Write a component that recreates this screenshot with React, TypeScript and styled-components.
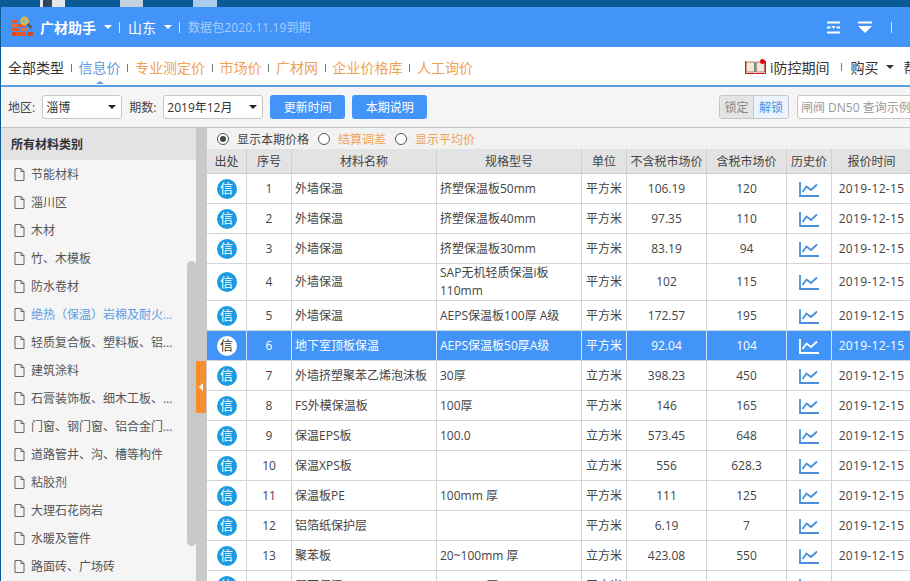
import React from 'react';
import styled, { createGlobalStyle } from 'styled-components';

const FONT = '"Open Sans", "Noto Sans CJK SC", sans-serif';
const BLUE = '#4294f8';

const tabs = [
  { label: '全部类型', tone: 'plain' },
  { label: '信息价', tone: 'active' },
  { label: '专业测定价', tone: 'orange' },
  { label: '市场价', tone: 'orange' },
  { label: '广材网', tone: 'orange' },
  { label: '企业价格库', tone: 'orange' },
  { label: '人工询价', tone: 'orange' },
];

const categories = [
  '节能材料',
  '淄川区',
  '木材',
  '竹、木模板',
  '防水卷材',
  '绝热（保温）岩棉及耐火材料',
  '轻质复合板、塑料板、铝塑板',
  '建筑涂料',
  '石膏装饰板、细木工板、胶合板',
  '门窗、钢门窗、铝合金门窗',
  '道路管井、沟、槽等构件',
  '粘胶剂',
  '大理石花岗岩',
  '水暖及管件',
  '路面砖、广场砖',
];

const rows = [
  ['外墙保温', '挤塑保温板50mm', '平方米', '106.19', '120'],
  ['外墙保温', '挤塑保温板40mm', '平方米', '97.35', '110'],
  ['外墙保温', '挤塑保温板30mm', '平方米', '83.19', '94'],
  ['外墙保温', 'SAP无机轻质保温i板110mm', '平方米', '102', '115'],
  ['外墙保温', 'AEPS保温板100厚 A级', '平方米', '172.57', '195'],
  ['地下室顶板保温', 'AEPS保温板50厚A级', '平方米', '92.04', '104'],
  ['外墙挤塑聚苯乙烯泡沫板', '30厚', '立方米', '398.23', '450'],
  ['FS外模保温板', '100厚', '平方米', '146', '165'],
  ['保温EPS板', '100.0', '立方米', '573.45', '648'],
  ['保温XPS板', '', '立方米', '556', '628.3'],
  ['保温板PE', '100mm 厚', '平方米', '111', '125'],
  ['铝箔纸保护层', '', '平方米', '6.19', '7'],
  ['聚苯板', '20~100mm 厚', '立方米', '423.08', '550'],
  ['屋面保温', '100mm 厚', '平方米', '132.74', '150'],
];

const columns = [
  { title: '出处', width: 40 },
  { title: '序号', width: 45 },
  { title: '材料名称', width: 145 },
  { title: '规格型号', width: 145 },
  { title: '单位', width: 45 },
  { title: '不含税市场价', width: 80 },
  { title: '含税市场价', width: 80 },
  { title: '历史价', width: 45 },
  { title: '报价时间', width: 80 },
];

const GlobalStyle = createGlobalStyle`
  html, body {
    margin: 0;
    padding: 0;
    background: #0a5a96;
  }
  * {
    box-sizing: border-box;
  }
`;

const Desktop = styled.div`
  width: 910px;
  height: 581px;
  overflow: hidden;
  display: flex;
  flex-direction: column;
  background: #0a5a96;
  font-family: ${FONT};
  font-size: 12px;
  color: #444;
`;

const TaskStrip = styled.div`
  height: 7px;
  flex-shrink: 0;
  display: flex;
  padding-left: 40px;
`;

const StripThumb = styled.div<{ $width: number; $gap: number; $color: string }>`
  width: ${({ $width }) => $width}px;
  margin-right: ${({ $gap }) => $gap}px;
  background: ${({ $color }) => $color};
`;

const AppWindow = styled.div`
  flex: 1;
  min-height: 0;
  margin-left: 1px;
  display: flex;
  flex-direction: column;
  background: #f5f5f5;
`;

const Header = styled.header`
  height: 40px;
  flex-shrink: 0;
  display: flex;
  align-items: center;
  padding-left: 10px;
  background: ${BLUE};
  color: #fff;
`;

const AppName = styled.div`
  margin-left: 5px;
  font-size: 14px;
  font-weight: 700;
`;

const Region = styled.div`
  font-size: 14px;
`;

const Caret = styled.span<{ $color?: string; $size?: number }>`
  display: inline-block;
  width: 0;
  height: 0;
  flex-shrink: 0;
  border-left: ${({ $size }) => $size ?? 4}px solid transparent;
  border-right: ${({ $size }) => $size ?? 4}px solid transparent;
  border-top: ${({ $size }) => $size ?? 4}px solid ${({ $color }) => $color ?? '#fff'};
`;

const HeaderCaret = styled(Caret)`
  margin: 0 7px 0 8px;
`;

const HeaderSep = styled.span`
  width: 1px;
  height: 11px;
  margin-right: 8px;
  background: #cfe3fd;
`;

const Expiry = styled.div`
  color: #a8cdfb;
  letter-spacing: 0.1px;
`;

const HeaderTools = styled.div`
  margin-left: auto;
  display: flex;
  align-items: center;
  width: 83px;
  flex-shrink: 0;
`;

const ToolIcon = styled.svg`
  display: block;
  margin-right: 18px;
`;

const ToolSep = styled.span`
  width: 1px;
  height: 11px;
  margin-left: 1px;
  background: #cfe3fd;
`;

const Nav = styled.nav`
  height: 40px;
  flex-shrink: 0;
  display: flex;
  align-items: center;
  padding: 2px 0 0 7px;
  background: #fff;
  border-bottom: 2px solid #5b9ee0;
  font-size: 14px;
`;

const toneColor: Record<string, string> = {
  plain: '#333',
  active: '#5b9ee0',
  orange: '#f0a254',
};

const Tab = styled.div<{ $tone: string }>`
  position: relative;
  white-space: nowrap;
  color: ${({ $tone }) => toneColor[$tone]};

  ${({ $tone }) =>
    $tone === 'active' &&
    `
    &::after {
      content: '';
      position: absolute;
      left: 50%;
      bottom: -7px;
      margin-left: -4px;
      border-left: 4px solid transparent;
      border-right: 4px solid transparent;
      border-bottom: 3px solid #5b9ee0;
    }
  `}
`;

const NavSep = styled.span`
  width: 1px;
  height: 8px;
  margin: 2px 6.75px 0;
  flex-shrink: 0;
  background: #777;
`;

const NavRight = styled.div`
  margin-left: auto;
  width: 165px;
  flex-shrink: 0;
  display: flex;
  align-items: center;
  overflow: hidden;
  white-space: nowrap;
  color: #333;
`;

const NavRightSep = styled(NavSep)`
  margin: 0 9px 0 11px;
`;

const BookIcon = styled.svg`
  display: block;
  flex-shrink: 0;
  margin-right: 4px;
`;

const BuyCaret = styled(Caret)`
  margin: 0 10px 0 7px;
  flex-shrink: 0;
`;

const Toolbar = styled.div`
  height: 41px;
  flex-shrink: 0;
  display: flex;
  align-items: center;
  padding: 0 0 1px 7px;
  background: #f5f5f5;
  border-bottom: 1px solid #c4c4c4;
  color: #444;
`;

const FieldLabel = styled.span`
  margin-right: 7px;
  white-space: nowrap;
`;

const FakeSelect = styled.div<{ $width: number }>`
  width: ${({ $width }) => $width}px;
  height: 24px;
  margin-right: 7px;
  padding: 0 5px 0 3px;
  display: flex;
  align-items: center;
  justify-content: space-between;
  background: #fff;
  border: 1px solid #c6c6c6;
  border-radius: 3px;
  color: #333;
`;

const ActionButton = styled.button`
  width: 75px;
  height: 24px;
  margin-right: 7px;
  padding: 0;
  border: 0;
  border-radius: 3px;
  background: ${BLUE};
  color: #fff;
  font-family: inherit;
  font-size: 12px;
`;

const ToolbarRight = styled.div`
  margin-left: auto;
  width: 191px;
  flex-shrink: 0;
  display: flex;
  align-items: center;
  overflow: hidden;
`;

const LockGroup = styled.div`
  display: flex;
  flex-shrink: 0;
  height: 24px;
  margin-right: 8px;
  border: 1px solid #c6c6c6;
  border-radius: 3px;
  overflow: hidden;
`;

const LockButton = styled.div<{ $on?: boolean }>`
  width: 34px;
  display: flex;
  align-items: center;
  justify-content: center;
  background: ${({ $on }) => ($on ? '#eaf3fe' : '#e4e4e4')};
  color: ${({ $on }) => ($on ? '#4a90e2' : '#888')};
  ${({ $on }) => !$on && 'border-right: 1px solid #c6c6c6;'}
`;

const SearchBox = styled.div`
  width: 130px;
  height: 24px;
  flex-shrink: 0;
  padding-left: 3px;
  display: flex;
  align-items: center;
  white-space: nowrap;
  background: #fff;
  border: 1px solid #c6c6c6;
  border-radius: 3px 0 0 3px;
  color: #9a9a9a;
`;

const Body = styled.div`
  flex: 1;
  min-height: 0;
  display: flex;
`;

const Sidebar = styled.aside`
  position: relative;
  width: 195px;
  flex-shrink: 0;
  overflow: hidden;
  background: #f5f5f5;
`;

const SidebarTitle = styled.div`
  height: 32px;
  display: flex;
  align-items: center;
  padding-left: 10px;
  background: #e3e3e3;
  color: #333;
  font-weight: 700;
`;

const CategoryList = styled.ul`
  margin: 0;
  padding: 0 22px 0 13px;
  list-style: none;
`;

const CategoryItem = styled.li<{ $active?: boolean }>`
  height: 28px;
  display: flex;
  align-items: center;
  color: ${({ $active }) => ($active ? '#5b9ee0' : '#555')};
`;

const CategoryText = styled.span`
  min-width: 0;
  overflow: hidden;
  white-space: nowrap;
  text-overflow: ellipsis;
`;

const FileIcon = styled.svg`
  display: block;
  flex-shrink: 0;
  margin-right: 6px;
`;

const ScrollThumb = styled.div`
  position: absolute;
  top: 133px;
  right: 0;
  width: 9px;
  height: 285px;
  border-radius: 5px;
  background: #c8c8c8;
`;

const Divider = styled.div`
  position: relative;
  width: 11px;
  flex-shrink: 0;
  background: #c9c9c9;
`;

const CollapseHandle = styled.div`
  position: absolute;
  top: 233px;
  left: 0;
  width: 10px;
  height: 52px;
  display: flex;
  align-items: center;
  justify-content: center;
  background: #f98f2c;
  border-radius: 1px;

  &::before {
    content: '';
    border-top: 4px solid transparent;
    border-bottom: 4px solid transparent;
    border-right: 4px solid #fff;
  }
`;

const Main = styled.main`
  flex: 1;
  min-width: 0;
  display: flex;
  flex-direction: column;
  overflow: hidden;
  background: #fff;
`;

const PriceModes = styled.div`
  height: 21px;
  flex-shrink: 0;
  display: flex;
  align-items: center;
  padding-left: 10px;
  background: #f2f2f2;
`;

const Radio = styled.span<{ $checked?: boolean }>`
  width: 12px;
  height: 12px;
  flex-shrink: 0;
  display: flex;
  align-items: center;
  justify-content: center;
  border: 1px solid #555;
  border-radius: 50%;
  background: #fff;

  &::after {
    content: '';
    width: 6px;
    height: 6px;
    border-radius: 50%;
    background: ${({ $checked }) => ($checked ? '#444' : 'transparent')};
  }
`;

const ModeLabel = styled.span<{ $orange?: boolean }>`
  margin: 0 9px 0 8px;
  white-space: nowrap;
  color: ${({ $orange }) => ($orange ? '#f0a254' : '#444')};
`;

const PriceTable = styled.table`
  width: 705px;
  table-layout: fixed;
  border-collapse: separate;
  border-spacing: 0;
  flex-shrink: 0;
`;

const HeadCell = styled.th`
  height: 25px;
  padding: 0;
  background: #e3e3e3;
  border-right: 1px solid #cfcfcf;
  border-bottom: 1px solid #cfcfcf;
  color: #444;
  font-weight: 400;
  text-align: center;
  white-space: nowrap;
`;

const Row = styled.tr<{ $selected?: boolean }>`
  height: 30px;
  background: ${({ $selected }) => ($selected ? BLUE : '#fff')};
  color: ${({ $selected }) => ($selected ? '#fff' : '#444')};

  td {
    border-right: 1px solid ${({ $selected }) => ($selected ? '#cfe3fd' : '#d4d4d4')};
    border-bottom: 1px solid #d4d4d4;
  }
`;

const Cell = styled.td<{ $left?: boolean }>`
  padding: ${({ $left }) => ($left ? '0 3px' : '0')};
  line-height: 18px;
  text-align: ${({ $left }) => ($left ? 'left' : 'center')};
`;

const DateCell = styled(Cell)`
  white-space: nowrap;
  letter-spacing: 0.3px;
`;

const Badge = styled.span<{ $selected?: boolean }>`
  width: 20px;
  height: 20px;
  display: inline-flex;
  align-items: center;
  justify-content: center;
  vertical-align: middle;
  border-radius: 50%;
  background: ${({ $selected }) => ($selected ? '#fff' : '#1b9ae0')};
  color: ${({ $selected }) => ($selected ? '#333' : '#fff')};
  font-size: 13px;
  line-height: 1;
`;

const TrendIcon = styled.svg`
  display: inline-block;
  vertical-align: middle;
`;

const LogoSvg = styled.svg`
  display: block;
  flex-shrink: 0;
`;

const BrickLogo = () => (
  <LogoSvg width="24" height="22" viewBox="0 0 24 22">
    <g fill="#e8562a">
      <rect x="1" y="4" width="5" height="3" />
      <rect x="1" y="8" width="5" height="3" fill="#f0693a" />
      <rect x="7" y="8" width="7" height="3" />
      <rect x="1" y="12" width="8" height="3" />
      <rect x="10" y="12" width="7" height="3" fill="#f0693a" />
      <rect x="1" y="16" width="5" height="4" fill="#d94a22" />
      <rect x="7" y="16" width="8" height="4" fill="#e8562a" />
      <rect x="16" y="16" width="6" height="4" fill="#d94a22" />
    </g>
    <circle cx="13.5" cy="5" r="3.6" fill="#a9b98e" stroke="#e8b53a" strokeWidth="1.6" />
    <path d="M16.5 8l4 4" stroke="#5a5238" strokeWidth="2" />
  </LogoSvg>
);

const CollapseIcon = () => (
  <ToolIcon width="13" height="13" viewBox="0 0 13 13">
    <path d="M0 1.5h13M0 11.5h13M0 6.5h3.5M9.5 6.5H13" stroke="#fff" strokeWidth="2" />
    <path d="M4.5 5h4l-2 3z" fill="#fff" />
  </ToolIcon>
);

const DropIcon = () => (
  <ToolIcon width="14" height="13" viewBox="0 0 14 13">
    <path d="M0 1.5h14" stroke="#fff" strokeWidth="2" />
    <path d="M0 5h14l-7 7z" fill="#fff" />
  </ToolIcon>
);

const Book = () => (
  <BookIcon width="21" height="16" viewBox="0 0 21 16">
    <path d="M1 3h8.5v10H1zM11 3h8.5v10H11z" fill="#efe9dc" stroke="#b5543f" strokeWidth="0.8" />
    <rect x="9" y="3" width="2.5" height="10" fill="#7d8a80" />
    <path d="M0.5 2v12.5h20V2" fill="none" stroke="#c8202a" strokeWidth="1.2" />
    <circle cx="17.5" cy="2.5" r="2.5" fill="#e60012" />
  </BookIcon>
);

const File = () => (
  <FileIcon width="11" height="13" viewBox="0 0 11 13">
    <path d="M1 .5h6l3 3v9H1z M7 .5v3h3" fill="none" stroke="#666" strokeWidth="1" />
  </FileIcon>
);

const Trend = ({ selected }: { selected: boolean }) => (
  <TrendIcon width="20" height="15" viewBox="0 0 20 15">
    <g fill="none" stroke={selected ? '#fff' : '#4a8fd8'} strokeWidth="1.8">
      <path d="M1 0v14h19" />
      <path d="M3.5 10l4-5.5 4.5 3.5 6-5.5" />
    </g>
  </TrendIcon>
);

const App: React.FC = () => {
  return (
    <Desktop>
      <GlobalStyle />
      <TaskStrip>
        <StripThumb $width={25} $gap={55} $color="linear-gradient(90deg, #e4e8ec 0 12%, #31465c 12% 48%, #e4e8ec 48%)" />
        <StripThumb $width={23} $gap={50} $color="#c3d2dc" />
        <StripThumb $width={24} $gap={0} $color="#a9cdea" />
      </TaskStrip>
      <AppWindow>
        <Header>
          <BrickLogo />
          <AppName>广材助手</AppName>
          <HeaderCaret />
          <HeaderSep />
          <Region>山东</Region>
          <HeaderCaret />
          <HeaderSep />
          <Expiry>数据包2020.11.19到期</Expiry>
          <HeaderTools>
            <CollapseIcon />
            <DropIcon />
            <ToolSep />
          </HeaderTools>
        </Header>
        <Nav>
          {tabs.map((tab, i) => (
            <React.Fragment key={tab.label}>
              {i > 0 && <NavSep />}
              <Tab $tone={tab.tone}>{tab.label}</Tab>
            </React.Fragment>
          ))}
          <NavRight>
            <Book />
            <span>i防控期间</span>
            <NavRightSep />
            <span>购买</span>
            <BuyCaret $color="#333" />
            <span>帮助</span>
          </NavRight>
        </Nav>
        <Toolbar>
          <FieldLabel>地区:</FieldLabel>
          <FakeSelect $width={80}>
            淄博
            <Caret $color="#222" />
          </FakeSelect>
          <FieldLabel>期数:</FieldLabel>
          <FakeSelect $width={100}>
            2019年12月
            <Caret $color="#222" />
          </FakeSelect>
          <ActionButton>更新时间</ActionButton>
          <ActionButton>本期说明</ActionButton>
          <ToolbarRight>
            <LockGroup>
              <LockButton>锁定</LockButton>
              <LockButton $on>解锁</LockButton>
            </LockGroup>
            <SearchBox>闸阀 DN50 查询示例</SearchBox>
          </ToolbarRight>
        </Toolbar>
        <Body>
          <Sidebar>
            <SidebarTitle>所有材料类别</SidebarTitle>
            <CategoryList>
              {categories.map((name, i) => (
                <CategoryItem key={name} $active={i === 5}>
                  <File />
                  <CategoryText>{name}</CategoryText>
                </CategoryItem>
              ))}
            </CategoryList>
            <ScrollThumb />
          </Sidebar>
          <Divider>
            <CollapseHandle />
          </Divider>
          <Main>
            <PriceModes>
              <Radio $checked />
              <ModeLabel>显示本期价格</ModeLabel>
              <Radio />
              <ModeLabel $orange>结算调差</ModeLabel>
              <Radio />
              <ModeLabel $orange>显示平均价</ModeLabel>
            </PriceModes>
            <PriceTable>
              <colgroup>
                {columns.map((col) => (
                  <col key={col.title} width={col.width} />
                ))}
              </colgroup>
              <thead>
                <tr>
                  {columns.map((col) => (
                    <HeadCell key={col.title}>{col.title}</HeadCell>
                  ))}
                </tr>
              </thead>
              <tbody>
                {rows.map((row, i) => {
                  const selected = i === 5;
                  return (
                    <Row key={i} $selected={selected}>
                      <Cell>
                        <Badge $selected={selected}>信</Badge>
                      </Cell>
                      <Cell>{i + 1}</Cell>
                      <Cell $left>{row[0]}</Cell>
                      <Cell $left>{row[1]}</Cell>
                      <Cell>{row[2]}</Cell>
                      <Cell>{row[3]}</Cell>
                      <Cell>{row[4]}</Cell>
                      <Cell>
                        <Trend selected={selected} />
                      </Cell>
                      <DateCell>2019-12-15</DateCell>
                    </Row>
                  );
                })}
              </tbody>
            </PriceTable>
          </Main>
        </Body>
      </AppWindow>
    </Desktop>
  );
};

export default App;
